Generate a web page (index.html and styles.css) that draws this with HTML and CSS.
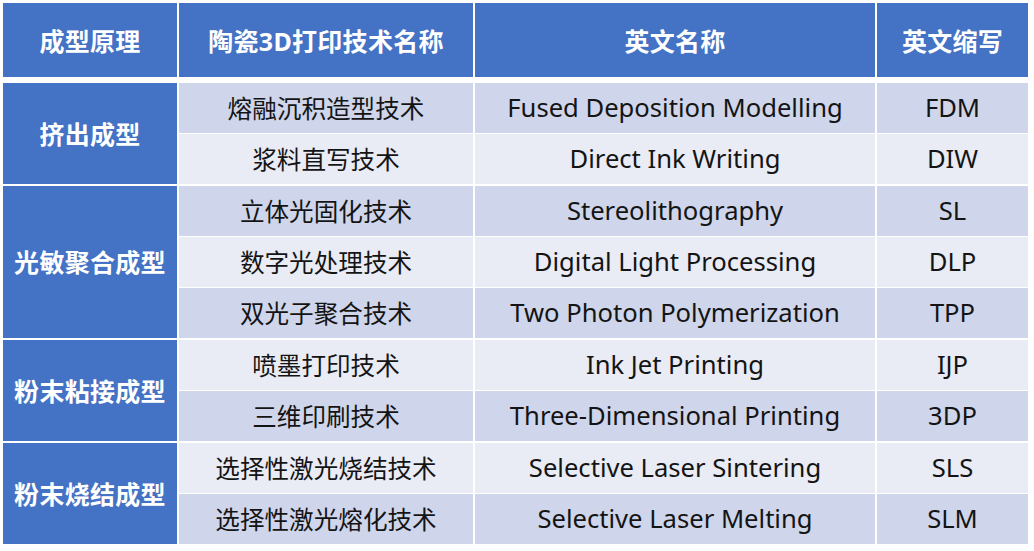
FILE: index.html
```html
<!DOCTYPE html>
<html lang="zh-CN">
<head>
<meta charset="utf-8">
<title>陶瓷3D打印技术</title>
<link rel="stylesheet" href="styles.css">
</head>
<body>
<table class="tbl">
  <colgroup>
    <col class="c1"><col class="c2"><col class="c3"><col class="c4">
  </colgroup>
  <thead>
    <tr class="head">
      <th class="first">成型原理</th>
      <th>陶瓷3D打印技术名称</th>
      <th>英文名称</th>
      <th>英文缩写</th>
    </tr>
  </thead>
  <tbody>
    <tr class="top dark">
      <td class="cat" rowspan="2">挤出成型</td>
      <td>熔融沉积造型技术</td><td class="en">Fused Deposition Modelling</td><td class="en">FDM</td>
    </tr>
    <tr class="in light">
      <td>浆料直写技术</td><td class="en">Direct Ink Writing</td><td class="en">DIW</td>
    </tr>
    <tr class="grp dark">
      <td class="cat" rowspan="3">光敏聚合成型</td>
      <td>立体光固化技术</td><td class="en">Stereolithography</td><td class="en">SL</td>
    </tr>
    <tr class="in light">
      <td>数字光处理技术</td><td class="en">Digital Light Processing</td><td class="en">DLP</td>
    </tr>
    <tr class="in dark">
      <td>双光子聚合技术</td><td class="en">Two Photon Polymerization</td><td class="en">TPP</td>
    </tr>
    <tr class="grp light">
      <td class="cat" rowspan="2">粉末粘接成型</td>
      <td>喷墨打印技术</td><td class="en">Ink Jet Printing</td><td class="en">IJP</td>
    </tr>
    <tr class="in dark">
      <td>三维印刷技术</td><td class="en">Three-Dimensional Printing</td><td class="en">3DP</td>
    </tr>
    <tr class="grp light">
      <td class="cat" rowspan="2">粉末烧结成型</td>
      <td>选择性激光烧结技术</td><td class="en">Selective Laser Sintering</td><td class="en">SLS</td>
    </tr>
    <tr class="in dark">
      <td>选择性激光熔化技术</td><td class="en">Selective Laser Melting</td><td class="en">SLM</td>
    </tr>
  </tbody>
</table>
</body>
</html>
```

FILE: styles.css
```css
html, body {
  margin: 0;
  padding: 0;
  background: #ffffff;
}
body {
  padding: 3px;
  font-family: "Noto Sans", "Noto Sans CJK SC", sans-serif;
}
.tbl {
  border-collapse: separate;
  border-spacing: 0;
  table-layout: fixed;
  width: 1025px;
}
.c1 { width: 174px; }
.c2 { width: 296px; }
.c3 { width: 402px; }
.c4 { width: 153px; }

.tbl th, .tbl td {
  padding: 0;
  text-align: center;
  vertical-align: middle;
  border: 0 solid #ffffff;
  border-left-width: 2px;
  box-sizing: border-box;
}
.tbl th.first, .tbl td.cat { border-left-width: 0; }

.head th {
  height: 74px;
  background: #4472c4;
  color: #ffffff;
  font-weight: 700;
  font-size: 25px;
  letter-spacing: 0.3px;
}

.tbl td {
  height: 50px;
  font-size: 24.6px;
  color: #141414;
  padding-bottom: 2px;
}
.tbl td.en {
  font-size: 25.6px;
}
.tbl td.cat {
  background: #4472c4;
  color: #ffffff;
  font-weight: 700;
  font-size: 25px;
  letter-spacing: 0.3px;
}
.dark td { background: #cfd5ea; }
.light td { background: #e9ebf5; }
.dark td.cat, .light td.cat { background: #4472c4; }

.top td { border-top-width: 6px; height: 56px; }
.grp td { border-top-width: 2px; height: 52px; }
.in td { border-top-width: 1px; height: 51px; }
```
